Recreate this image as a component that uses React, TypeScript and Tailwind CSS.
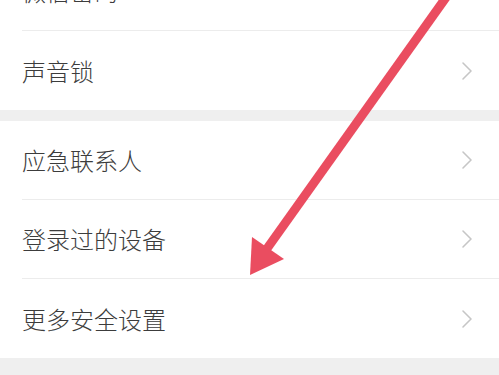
import React from "react";

const Chevron = () => (
  <svg width="12" height="20" viewBox="0 0 12 20" className="shrink-0">
    <path d="M2 2 L10 10 L2 18" fill="none" stroke="#c6c6c6" strokeWidth="1.6" strokeLinecap="round" strokeLinejoin="round" />
  </svg>
);

const Row = ({ label, last }: { label: string; last?: boolean }) => (
  <div className="bg-white pl-[22px]">
    <div
      className={`h-[79px] flex items-center justify-between pr-[26px] ${last ? "" : "border-b border-[#ececec]"}`}
    >
      <span className="text-[24px] font-light text-[#3c3c3c] leading-none">{label}</span>
      <Chevron />
    </div>
  </div>
);

export default function App() {
  return (
    <div
      className="relative w-[499px] h-[375px] overflow-hidden bg-[#efefef]"
      style={{ fontFamily: '"Noto Sans CJK SC", "Noto Sans", sans-serif' }}
    >
      <div className="mt-[-48px]">
        <Row label="微信密码" />
        <Row label="声音锁" last />
        <div className="h-[11px] bg-[#efefef]" />
        <Row label="应急联系人" />
        <Row label="登录过的设备" />
        <Row label="更多安全设置" last />
      </div>
      <svg className="absolute inset-0" width="499" height="375" viewBox="0 0 499 375">
        <line x1="462" y1="-25" x2="266" y2="250" stroke="#ea4d60" strokeWidth="9" />
        <polygon points="250,275 252,237 284,259" fill="#ea4d60" />
      </svg>
    </div>
  );
}
